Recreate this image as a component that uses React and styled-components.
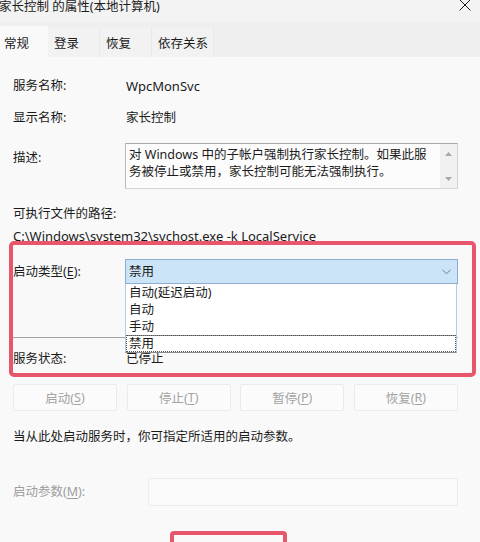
import React from "react";
import styled, { createGlobalStyle } from "styled-components";

const Global = createGlobalStyle`
  html, body { margin: 0; padding: 0; background: #f9f9f9; overflow: hidden; }
  * { box-sizing: border-box; }
`;

const RED = "#e8566b";

const Frame = styled.div`
  width: 480px;
  height: 542px;
  overflow: hidden;
  display: flex;
  flex-direction: column;
  background: #f9f9f9;
  font-family: "Noto Sans", "Noto Sans CJK SC", sans-serif;
  font-size: 12.5px;
  color: #1b1b1b;
`;

const TitleBar = styled.div`
  height: 22px;
  flex: none;
  display: flex;
  align-items: flex-start;
  background: #f3f3f3;
`;

const Title = styled.div`
  margin-left: -1px;
  line-height: 14px;
  white-space: nowrap;
`;

const CloseBtn = styled.div`
  margin-left: auto;
  margin-right: 8px;
  margin-top: -2px;
  width: 14px;
  height: 14px;
  display: flex;
`;

const TabStrip = styled.div`
  height: 35px;
  flex: none;
  display: flex;
  align-items: flex-end;
  background: #efefef;
`;

const Tab = styled.div`
  height: ${(p) => (p.$active ? 31 : 29)}px;
  padding: ${(p) => (p.$active ? "4px 19px 0 4px" : `2px ${p.$pr ?? 20}px 0 ${p.$pl ?? 6}px`)};
  display: flex;
  align-items: center;
  background: ${(p) => (p.$active ? "#f9f9f9" : "#f2f2f2")};
  border-right: ${(p) => (p.$active ? "none" : "1px solid #e8e8e8")};
  white-space: nowrap;
  line-height: 20px;
`;

const Panel = styled.div`
  flex: 1;
  display: flex;
  flex-direction: column;
  padding: 19px 22px 0 13px;
`;

const Row = styled.div`
  display: grid;
  grid-template-columns: ${(p) => p.$label || 112}px 1fr;
  align-items: ${(p) => (p.$top ? "start" : "center")};
  min-height: 20px;
  margin-top: ${(p) => p.$mt || 0}px;
  line-height: 20px;
  white-space: nowrap;
`;

const Label = styled.div`
  color: ${(p) => (p.$muted ? "#9d9d9d" : "#1b1b1b")};
  padding-top: ${(p) => p.$pt || 0}px;
`;

const Value = styled.div`
  padding-left: 1px;
  font-size: ${(p) => p.$size || 12.5}px;
`;

const Line = styled.div`
  margin-top: ${(p) => p.$mt || 0}px;
  height: 20px;
  line-height: 20px;
  font-size: ${(p) => p.$size || 12.5}px;
  white-space: nowrap;
`;

const TextBox = styled.div`
  height: 46px;
  display: flex;
  background: #fcfcfc;
  border: 1px solid #d4d4d4;
  border-top-color: #a9a9a9;
  border-left-color: #b9b9b9;
`;

const TextBody = styled.div`
  flex: 1;
  padding: 2px 0 0 3px;
  line-height: 17px;
  white-space: nowrap;
  overflow: hidden;
`;

const ScrollBar = styled.div`
  width: 17px;
  display: flex;
  flex-direction: column;
  justify-content: space-between;
  align-items: center;
  padding: 8px 0 7px;
  background: #f1f1f1;
`;

const StartupSection = styled.div`
  margin: -5px -18px 0 -4px;
  border: 4px solid ${RED};
  border-radius: 5px;
  padding: 14px 14px 4px 0;
  display: flex;
  flex-direction: column;
`;

const ComboWrap = styled.div`
  position: relative;
`;

const Combo = styled.div`
  height: 25px;
  display: flex;
  align-items: center;
  justify-content: space-between;
  padding: 0 6px 0 3px;
  background: #cce4f7;
  border: 1px solid #8eaccd;
`;

const DropList = styled.div`
  position: absolute;
  top: 100%;
  left: 0;
  right: 1px;
  z-index: 2;
  background: #ffffff;
  border: 1px solid #b3cbe6;
  border-top: none;
  border-bottom-color: #8c8c8c;
`;

const Option = styled.div`
  height: 17px;
  padding-left: 3px;
  outline: ${(p) => (p.$focus ? "1px dotted #555" : "none")};
  outline-offset: -1px;
  border-top: ${(p) => (p.$focus ? "1px solid #8c8c8c" : "none")};
  line-height: ${(p) => (p.$focus ? 16 : 17)}px;
`;

const Separator = styled.div`
  height: 1px;
  margin-top: 53px;
  background: #a3a3a3;
`;

const ButtonRow = styled.div`
  margin-top: 7px;
  display: flex;
  justify-content: space-between;
`;

const Btn = styled.div`
  width: 104px;
  height: 27px;
  display: flex;
  align-items: center;
  justify-content: center;
  color: #a3a3a3;
  background: #fbfbfb;
  border: 1px solid #ebebeb;
  border-radius: 2px;
  white-space: nowrap;
`;

const Input = styled.div`
  height: 28px;
  background: #fafafa;
  border: 1px solid #ececec;
  border-radius: 2px;
`;

const Footer = styled.div`
  margin-top: 25px;
  padding-left: 157px;
  display: flex;
`;

const OkFrame = styled.div`
  width: 117px;
  height: 40px;
  border: 4px solid ${RED};
  border-radius: 4px;
  display: flex;
  align-items: flex-start;
  justify-content: center;
  padding-top: 14px;
  color: #1b1b1b;
`;

const U = styled.span`
  text-decoration: underline;
  text-underline-offset: 2px;
`;

const Chevron = () => (
  <svg width="9" height="6" viewBox="0 0 9 6">
    <polyline points="0.5,0.8 4.5,4.8 8.5,0.8" fill="none" stroke="#6d7d8f" strokeWidth="1" />
  </svg>
);

const Arrow = ({ up }) => (
  <svg width="7" height="4" viewBox="0 0 7 4">
    <polygon points={up ? "0,4 3.5,0 7,4" : "0,0 3.5,4 7,0"} fill="#a8a8a8" />
  </svg>
);

export default function App() {
  return (
    <>
      <Global />
      <Frame>
        <TitleBar>
          <Title>家长控制 的属性(本地计算机)</Title>
          <CloseBtn>
            <svg width="14" height="14" viewBox="0 0 14 14">
              <path d="M1.5 1.5 L12.5 12.5 M12.5 1.5 L1.5 12.5" stroke="#1b1b1b" strokeWidth="1" />
            </svg>
          </CloseBtn>
        </TitleBar>
        <TabStrip>
          <Tab $active>常规</Tab>
          <Tab>登录</Tab>
          <Tab>恢复</Tab>
          <Tab $pr={5}>依存关系</Tab>
        </TabStrip>
        <Panel>
          <Row>
            <Label>服务名称:</Label>
            <Value $size={13}>WpcMonSvc</Value>
          </Row>
          <Row $mt={12}>
            <Label>显示名称:</Label>
            <Value>家长控制</Value>
          </Row>
          <Row $mt={15} $top>
            <Label $pt={5}>描述:</Label>
            <TextBox>
              <TextBody>
                <div>对 Windows 中的子帐户强制执行家长控制。如果此服</div>
                <div>务被停止或禁用，家长控制可能无法强制执行。</div>
              </TextBody>
              <ScrollBar>
                <Arrow up />
                <Arrow />
              </ScrollBar>
            </TextBox>
          </Row>
          <Line $mt={15}>可执行文件的路径:</Line>
          <Line $mt={2} $size={13}>C:\Windows\system32\svchost.exe -k LocalService</Line>
          <StartupSection>
            <Row>
              <Label>
                启动类型(<U>E</U>):
              </Label>
              <ComboWrap>
                <Combo>
                  <span>禁用</span>
                  <Chevron />
                </Combo>
                <DropList>
                  <Option>自动(延迟启动)</Option>
                  <Option>自动</Option>
                  <Option>手动</Option>
                  <Option $focus>禁用</Option>
                </DropList>
              </ComboWrap>
            </Row>
            <Separator />
            <Row $mt={11}>
              <Label>服务状态:</Label>
              <Value>已停止</Value>
            </Row>
          </StartupSection>
          <ButtonRow>
            <Btn>
              启动(<U>S</U>)
            </Btn>
            <Btn>
              停止(<U>T</U>)
            </Btn>
            <Btn>
              暂停(<U>P</U>)
            </Btn>
            <Btn>
              恢复(<U>R</U>)
            </Btn>
          </ButtonRow>
          <Line $mt={16}>当从此处启动服务时，你可指定所适用的启动参数。</Line>
          <Row $mt={31} $label={135}>
            <Label $muted>
              启动参数(<U>M</U>):
            </Label>
            <Input />
          </Row>
          <Footer>
            <OkFrame>确定</OkFrame>
          </Footer>
        </Panel>
      </Frame>
    </>
  );
}
